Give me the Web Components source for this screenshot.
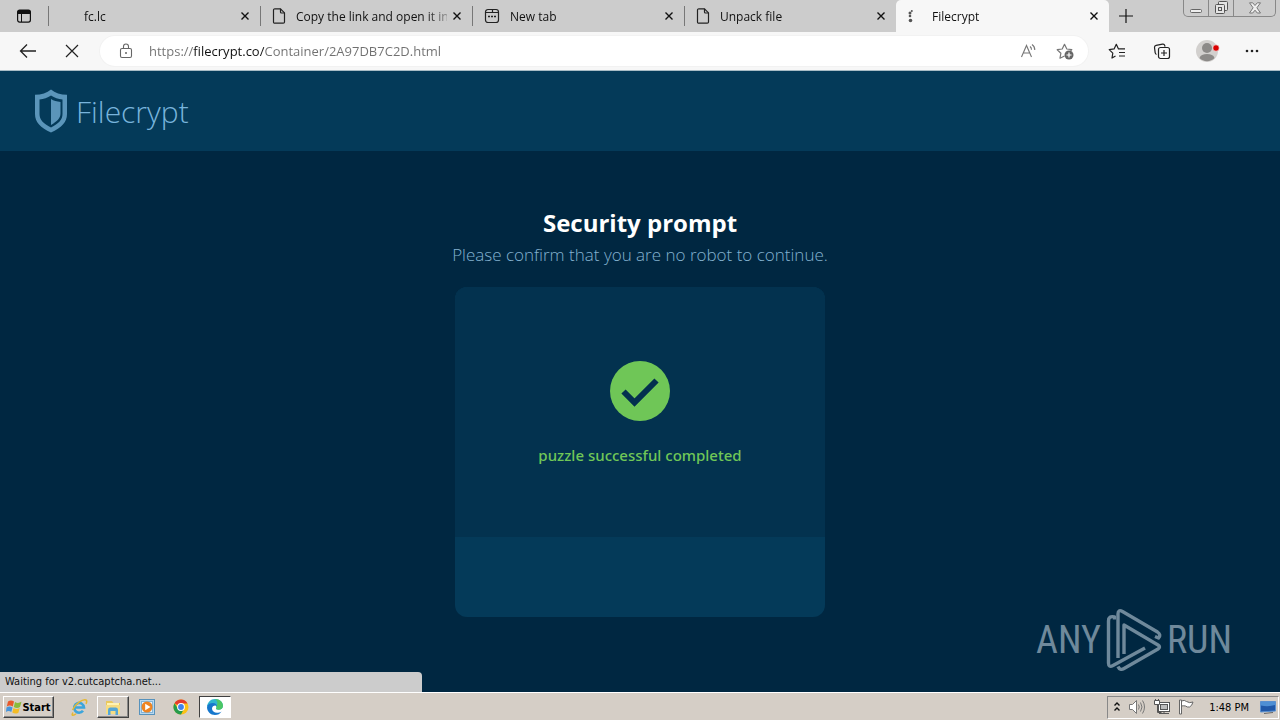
<!DOCTYPE html>
<html lang="en">
<head>
<meta charset="utf-8">
<meta name="viewport" content="width=device-width, initial-scale=1">
<title>Filecrypt</title>
<style>
html, body {
    height: 100%;
    margin: 0;
}
body {
    font-family: 'Open Sans', 'Noto Sans', sans-serif;
    font-size: 12px;
    overflow: hidden;
}
</style>
</head>
<body>
<app-desktop></app-desktop>

<script>
const icons = {
    panel: '<svg width="16" height="16" viewBox="0 0 16 16"><rect x="1.6" y="2.1" width="12.8" height="12" rx="2" fill="none" stroke="#111" stroke-width="1.2"/><path d="M1.5 6V4a2 2 0 0 1 2-2h9a2 2 0 0 1 2 2v2z" fill="#111"/><path d="M5.5 6v8" stroke="#111"/></svg>',
    file: '<svg width="14" height="16" viewBox="0 0 14 16" fill="none" stroke="#222" stroke-width="1.2" stroke-linejoin="round"><path d="M3 .8h5.5l4 4V14a1.2 1.2 0 0 1-1.2 1.2H3A1.2 1.2 0 0 1 1.5 14V2.2A1.3 1.3 0 0 1 3 .8z"/><path d="M8.5.8V4a1 1 0 0 0 1 1h3"/></svg>',
    newtab: '<svg width="16" height="16" viewBox="0 0 16 16" fill="none" stroke="#222" stroke-width="1.2"><path d="M1.5 4A2.5 2.5 0 0 1 4 1.500h8A2.5 2.5 0 0 1 14.5 4v8a2.5 2.5 0 0 1-2.5 2.5H4A2.5 2.5 0 0 1 1.5 12z"/><path d="M1.5 4.500h7V1.500M8.5 4.500h6"/><path d="M4 8.500h2M7 8.500h2M10 8.500h2" stroke-width="1.7"/></svg>',
    loading: '<svg width="14" height="16" viewBox="0 0 14 16" fill="#555"><circle cx="2" cy="5" r="1.5"/><circle cx="3.800" cy="3" r="1"/><circle cx="2" cy="8" r="1.3"/><circle cx="2.500" cy="12.500" r="1.8"/></svg>',
    close: '<svg width="10" height="10" viewBox="0 0 10 10"><path d="M1.5 1.500l7 7M8.5 1.500l-7 7" stroke="#111" stroke-width="1.4"/></svg>',
    plus: '<svg width="16" height="16" viewBox="0 0 16 16"><path d="M8 1v14M1 8h14" stroke="#111" stroke-width="1.2"/></svg>',
    back: '<svg width="18" height="16" viewBox="0 0 18 16" fill="none" stroke="#222" stroke-width="1.3"><path d="M17 8H1.500M8 1.500L1.500 8 8 14.500"/></svg>',
    stop: '<svg width="14" height="14" viewBox="0 0 14 14"><path d="M1 1l12 12M13 1L1 13" stroke="#222" stroke-width="1.2"/></svg>',
    lock: '<svg width="14" height="16" viewBox="0 0 14 16" fill="none" stroke="#666" stroke-width="1.1"><rect x="1.5" y="5.5" width="11" height="9" rx="1.5"/><path d="M4.5 5.500V3.500a2.500 2.500 0 0 1 5 0v2"/><circle cx="7" cy="10" r="1" fill="#666" stroke="none"/></svg>',
    read: '<svg width="18" height="16" viewBox="0 0 18 16" fill="none" stroke="#777" stroke-width="1.1"><path d="M1.5 14L6.500 2.500 11.500 14M3.200 10h6.600"/><path d="M10 3.500a4 4 0 0 1 1.500 3.200M12 1.500a6.500 6.500 0 0 1 2.800 5.500"/></svg>',
    addstar: '<svg width="18" height="18" viewBox="0 0 18 18" fill="none" stroke="#777" stroke-width="1.2" stroke-linejoin="round"><path d="M8.500 14L4 16.200l.9-5-3.700-3.500 5-.7 2.300-4.700L10.800 7l5 .7-1.300 1.300"/><circle cx="13" cy="13" r="4.5" fill="#666" stroke="none"/><path d="M10.500 13h5M13 10.500v5" stroke="#fff"/></svg>',
    favorites: '<svg width="18" height="18" viewBox="0 0 18 18" fill="none" stroke="#222" stroke-width="1.2" stroke-linejoin="round"><path d="M7.500 14L4 16l.8-4.900L1.200 7.600l4.900-.7L8.300 2.300l2.200 4.600H17M11 10.500h6M11 14h6"/></svg>',
    collections: '<svg width="18" height="18" viewBox="0 0 18 18" fill="none" stroke="#222" stroke-width="1.2"><path d="M3.500 12.500A2 2 0 0 1 2.200 10.800L1.500 5.500a2 2 0 0 1 1.600-2.200l6.400-1.200a2 2 0 0 1 2.300 1.500l.2 1"/><rect x="5.5" y="5.5" width="11" height="11" rx="2"/><path d="M8 11h6M11 8v6"/></svg>',
    profile: '<svg width="24" height="24" viewBox="0 0 24 24"><circle cx="12" cy="12" r="11" fill="#d2d0ce"/><circle cx="12" cy="9" r="5" fill="#8c8a88"/><path d="M4.500 19c1-3 3.500-4 7.500-4s6.500 1 7.500 4a10.500 10.500 0 0 1-15 0z" fill="#8c8a88"/><circle cx="21" cy="9" r="3.2" fill="#d90000" stroke="#f7f7f7" stroke-width=".6"/></svg>',
    more: '<svg width="16" height="16" viewBox="0 0 16 16" fill="#222"><circle cx="3" cy="8" r="1.3"/><circle cx="8" cy="8" r="1.3"/><circle cx="13" cy="8" r="1.3"/></svg>',
    minimize: '<svg width="14" height="12" viewBox="0 0 14 12"><rect x="1.5" y="7.5" width="11" height="3" rx="1" fill="#eee" stroke="#666"/></svg>',
    restore: '<svg width="14" height="14" viewBox="0 0 14 14" fill="#e4e4e4" stroke="#555"><rect x="4.5" y=".5" width="9" height="9" rx="1"/><rect x="1.5" y="3.5" width="9" height="9" rx="1"/><rect x="4.5" y="6.5" width="3" height="3"/></svg>',
    winclose: '<svg width="14" height="12" viewBox="0 0 14 12"><path d="M1.500.8h3.200L7 3.500 9.300.8h3.200L8.900 5.800l3.600 5.200H9.300L7 8.200 4.700 11H1.500l3.600-5.200z" fill="#eee" stroke="#777"/></svg>',
    shield: '<svg width="34" height="44" viewBox="0 0 34 44"><path fill-rule="evenodd" d="M17 .5c4 3.600 9.600 5.200 16 5.200V25c0 8-5.500 14-16 18.500C6.500 39 1 33 1 25V5.700c6.400 0 12-1.600 16-5.200zm0 6c-3.500 2.500-7.200 3.500-11.500 4V25c0 5.500 3.800 9.800 11.500 13.500 7.700-3.700 11.500-8 11.500-13.500V10.500c-4.300-.5-8-1.500-11.500-4z" fill="#5b95ba"/><path d="M17 10c2.700 1.700 5.800 2.600 9.500 3v11.500c0 4.500-3.500 8-9.500 11.500z" fill="#5b95ba"/></svg>',
    check: '<svg width="60" height="60" viewBox="0 0 60 60"><circle cx="30" cy="30" r="30" fill="#6fc657"/><path d="M13.500 30.500l11 11L46.500 19.500" fill="none" stroke="#03304f" stroke-width="6"/></svg>',
    play: '<svg width="56" height="64" viewBox="0 0 56 64" fill="none" stroke="currentColor" stroke-width="3.4" stroke-linejoin="round"><path d="M8.500 11.500V9Q2.500 7.500 2.500 13v42q0 5 4.500 2.500L39 40"/><path d="M12 50V6q0-5 4.500-2.500L51.500 24q4 3 1 6L49 28.500"/><path d="M18 46V17l34 20q3 2 0 4L18 60.500q-4 2.500-6-2"/></svg>',
    windows: '<svg width="16" height="16" viewBox="0 0 16 16"><path d="M2 2.500c2-1.500 4-1.500 6 0L6.800 7.500c-2-1.300-4-1.200-6-.1z" fill="#e8582a"/><path d="M9 3c2 1.200 4 1.200 6.500-.2L14 8c-2 1.200-4 1.200-6.200 0z" fill="#8abb3a"/><path d="M.5 8.500c2-1.200 4-1.200 6 0L5.300 13c-2-1.200-3.500-1.200-5.300 0z" fill="#4594dc"/><path d="M7.500 9c2 1.300 4 1.300 6.200 0l-1.300 4.700c-2 1.200-4 1.200-6.100-.2z" fill="#f4bc25"/></svg>',
    ie: '<svg width="18" height="18" viewBox="0 0 18 18" fill="none"><path d="M5 9.500h9A4.900 4.900 0 1 0 13 12.800" stroke="#3ba5dc" stroke-width="2.6"/><path d="M3 14.500C1 18 2.500 18 6 15.800M2.500 12C5 6 13 .5 16 2c1.200.7.8 2.200 0 3.800" stroke="#e5b834" stroke-width="1.5"/></svg>',
    explorer: '<svg width="18" height="18" viewBox="0 0 18 18"><path d="M2 3h6l1.500 2H16v11H2z" fill="#e9c85d"/><path d="M3 5h12v6H3z" fill="#fff3b2"/><path d="M2 7h14v9H2z" fill="#f6dc81"/><path d="M4 17v-5q0-2.500 2-2.500h6q2 0 2 2.500v5h-2.500v-4h-5v4z" fill="#54a6d6"/></svg>',
    media: '<svg width="16" height="16" viewBox="0 0 16 16"><rect x=".5" y=".5" width="15" height="15" fill="#b8d8ef" stroke="#5792bc"/><rect x="2.5" y="2.5" width="11" height="11" fill="#e7f3fb" stroke="#82b4d8"/><circle cx="8" cy="8" r="5.5" fill="#ee8422"/><path d="M6.200 4.800v6.400L11.500 8z" fill="#fff"/></svg>',
    chrome: '<svg width="16" height="16" viewBox="0 0 16 16"><circle cx="8" cy="8" r="7.5" fill="#fbc116"/><path d="M8 8L1.500 4.200A7.500 7.500 0 0 1 14.500 4.500H8z" fill="#e33b2e"/><path d="M1.500 4.200A7.500 7.500 0 0 0 8 15.500L11 9.700 5 9.700z" fill="#259b4c"/><circle cx="8" cy="8" r="3.9" fill="#fff"/><circle cx="8" cy="8" r="2.9" fill="#3f82ed"/></svg>',
    edge: '<svg width="18" height="18" viewBox="0 0 18 18"><path d="M1 8.800C1.300 4.500 4.700 1 9 1c4.700 0 8 3 8 6.800 0 2.500-2 4-4.500 4-1.800 0-2.800-.5-2.400-1.200 1.200-2-.3-4.100-3-4.100C4.200 6.500 2 7.500 1 8.800z" fill="#2fb5cf"/><path d="M9 1c4.700 0 8 3 8 6.800 0 2.500-2 4-4.500 4-1.800 0-2.800-.5-2.400-1.200.5-1 .5-1.700 0-2.500C12 6 12 3.500 9 1z" fill="#4cc665"/><path d="M1 9c.5-2.500 3-4 6-4 2.200 0 4 1.300 4 3.300-1-1.500-5-1-5 2.500 0 3.500 5 5.500 9.600 2.600A8 8 0 0 1 9 17C4.500 17 1 13.500 1 9z" fill="#1677cc"/></svg>',
    chevrons: '<svg width="8" height="10" viewBox="0 0 8 10" fill="none" stroke="#111" stroke-width="1.4"><path d="M1.500 3.500L4 1l2.500 2.500M1.500 8.500L4 6l2.500 2.500"/></svg>',
    volume: '<svg width="18" height="16" viewBox="0 0 18 16" fill="#fff" stroke="#777"><path d="M1.500 5.500h3l4-4v13l-4-4h-3z"/><path d="M10.500 5.500q1.500 2.500 0 5M12.500 3.500q3 4.500 0 9M14.500 1.500q4 6.500 0 13" fill="none"/></svg>',
    network: '<svg width="18" height="16" viewBox="0 0 18 16" fill="#fff" stroke="#555"><rect x="5.5" y="3.5" width="11" height="9"/><rect x="7.5" y="5.5" width="7" height="5" fill="#bbb"/><path d="M6 14.500h10M11 13v1"/><path d="M4.500 5v8.500h4" fill="none"/><path d="M1.500 1.500h5v4h-5zM2.500 0v2M5.500 0v2"/></svg>',
    flag: '<svg width="16" height="16" viewBox="0 0 16 16" fill="#fff" stroke="#666"><path d="M1.500 1h2v14h-2z"/><path d="M3.500 2q3-1.500 5 .5 3 2 6.500.5-1 4-3.500 5-2 .5-4-1-2-.5-4 0z"/></svg>',
    show: '<svg width="16" height="14" viewBox="0 0 16 14"><path d="M.5 1.500h15v9.500l-15 1z" fill="#2058a8" stroke="#5a90d0"/><path d="M1 2h14v3Q8 7 1 5.500z" fill="#4e8fd4"/><path d="M4 13.500l9-1" stroke="#666"/></svg>'
};

// Attaches an open shadow root with the given markup
class BaseElement extends HTMLElement {
    constructor() {
        super();
        this.attachShadow({mode: 'open'});
    }

    connectedCallback() {
        const template = document.createElement('template');
        template.innerHTML = this.render();
        this.shadowRoot.replaceChildren(template.content.cloneNode(true));
    }
}

class UiIcon extends BaseElement {
    render() {
        return `
<style>
:host { display: inline-flex; flex: none; }
svg { display: block; overflow: visible; }
</style>
${icons[this.getAttribute('name')] || ''}`;
    }
}

class IconButton extends BaseElement {
    render() {
        return `
<style>
:host { display: flex; flex: none; }
button {
    display: flex;
    align-items: center;
    justify-content: center;
    width: var(--size, 28px);
    height: 28px;
    padding: 0;
    border: 0;
    background: none;
}
</style>
<button type="button" aria-label="${this.getAttribute('label')}"><ui-icon name="${this.getAttribute('icon')}"></ui-icon></button>`;
    }
}

class BrowserTab extends BaseElement {
    render() {
        return `
<style>
:host {
    display: flex;
    flex: 0 1 212px;
    min-width: 0;
    box-sizing: border-box;
    align-items: center;
    padding: 0 5px 0 12px;
    background: linear-gradient(#777, #777) left center / 1px 20px no-repeat;
}
:host([active]) {
    flex-basis: 213px;
    background: #f7f7f7;
    border-radius: 5px 5px 0 0;
}
.tab {
    display: flex;
    flex: 1;
    min-width: 0;
    align-items: center;
    gap: 10px;
    height: 32px;
    padding: 0;
    border: 0;
    background: none;
    color: #111;
    font: inherit;
}
.icon {
    display: flex;
    justify-content: center;
    flex: 0 0 14px;
}
.title {
    flex: 1;
    overflow: hidden;
    white-space: nowrap;
    text-align: left;
    -webkit-mask-image: linear-gradient(to right, #000 130px, transparent 160px);
    mask-image: linear-gradient(to right, #000 130px, transparent 160px);
}
icon-button { --size: 20px; }
</style>
<button class="tab" type="button">
    <span class="icon"><ui-icon name="${this.getAttribute('icon') || ''}"></ui-icon></span>
    <span class="title"><slot></slot></span>
</button>
<icon-button icon="close" label="Close tab"></icon-button>`;
    }
}

class WindowControls extends BaseElement {
    render() {
        return `
<style>
:host {
    display: flex;
    align-self: flex-start;
    height: 16px;
    margin: 0 4px 0 auto;
    border: 1px solid #888;
    border-top: 0;
    border-radius: 0 0 5px 5px;
}
button {
    display: flex;
    align-items: center;
    justify-content: center;
    width: 25px;
    padding: 0;
    border: 0;
    border-right: 1px solid #888;
    background: none;
}
button:last-child { width: 41px; border-right: 0; }
</style>
<button type="button" aria-label="Minimize"><ui-icon name="minimize"></ui-icon></button>
<button type="button" aria-label="Restore"><ui-icon name="restore"></ui-icon></button>
<button type="button" aria-label="Close"><ui-icon name="winclose"></ui-icon></button>`;
    }
}

class TabStrip extends BaseElement {
    render() {
        return `
<style>
:host {
    display: flex;
    height: 32px;
    background: #ccc;
}
.menu { --size: 48px; align-items: center; }
.new { --size: 34px; align-items: center; }
</style>
<icon-button class="menu" icon="panel" label="Tab actions"></icon-button>
<slot></slot>
<icon-button class="new" icon="plus" label="New tab"></icon-button>
<window-controls></window-controls>`;
    }
}

class AddressBar extends BaseElement {
    render() {
        return `
<style>
:host {
    display: flex;
    align-items: center;
    height: 38px;
    padding: 0 6px;
    background: #f7f7f7;
    border-bottom: 1px solid #a9bcc6;
}
.nav { --size: 44px; }
.box {
    display: flex;
    flex: 1;
    align-items: center;
    height: 30px;
    padding: 0 5px 0 12px;
    margin: 0 6px;
    border-radius: 15px;
    background: #fff;
    box-shadow: 0 0 0 1px #f2f2f2;
}
.box icon-button { --size: 36px; }
.box .lock { --size: 28px; }
input {
    flex: 1;
    min-width: 0;
    height: 24px;
    padding: 0;
    margin-left: 9px;
    border: 0;
    outline: 0;
    font: 13px 'Open Sans', sans-serif;
    color: transparent;
    background: linear-gradient(to right, #707070 44px, #111 44px, #111 115px, #707070 115px);
    -webkit-background-clip: text;
    background-clip: text;
}
.actions { display: flex; }
.actions icon-button { --size: 45px; }
</style>
<icon-button class="nav" icon="back" label="Back"></icon-button>
<icon-button class="nav" icon="stop" label="Stop"></icon-button>
<div class="box">
    <icon-button class="lock" icon="lock" label="Site information"></icon-button>
    <input type="text" aria-label="Address" value="${this.getAttribute('url')}">
    <icon-button icon="read" label="Read aloud"></icon-button>
    <icon-button icon="addstar" label="Add to favorites"></icon-button>
</div>
<div class="actions">
    <icon-button icon="favorites" label="Favorites"></icon-button>
    <icon-button icon="collections" label="Collections"></icon-button>
    <icon-button icon="profile" label="Profile"></icon-button>
    <icon-button icon="more" label="Settings"></icon-button>
</div>`;
    }
}

class SiteHeader extends BaseElement {
    render() {
        return `
<style>
:host {
    display: flex;
    align-items: center;
    height: 80px;
    padding: 0 34px;
    background: #043a59;
}
a {
    display: flex;
    align-items: center;
    gap: 8px;
    color: #78b4dc;
    font-size: 30px;
    font-weight: 300;
    text-decoration: none;
}
</style>
<a href="#"><ui-icon name="shield"></ui-icon><slot></slot></a>`;
    }
}

class CaptchaCard extends BaseElement {
    render() {
        return `
<style>
:host {
    display: block;
    box-sizing: border-box;
    width: 370px;
    max-width: 100%;
    overflow: hidden;
    border-radius: 12px;
    background: #043a59;
}
.result {
    display: flex;
    flex-direction: column;
    align-items: center;
    gap: 22px;
    padding: 74px 0 70px;
    background: #03324f;
    color: #70c757;
    font: 500 15px/24px 'Noto Sans', sans-serif;
}
.footer { height: 80px; }
</style>
<div class="result">
    <ui-icon name="check"></ui-icon>
    <slot></slot>
</div>
<div class="footer"></div>`;
    }
}

class SecurityPrompt extends BaseElement {
    render() {
        return `
<style>
:host {
    display: flex;
    flex-direction: column;
    align-items: center;
    padding-top: 54px;
}
h2 {
    margin: 0;
    color: #fff;
    font-size: 24px;
    line-height: 36px;
}
p {
    margin: 0 0 18px;
    color: #84b2d0;
    font-size: 17px;
    font-weight: 300;
    line-height: 28px;
}
</style>
<h2><slot name="title"></slot></h2>
<p><slot name="text"></slot></p>
<slot></slot>`;
    }
}

class StatusBubble extends BaseElement {
    render() {
        return `
<style>
:host {
    position: absolute;
    left: 0;
    bottom: 0;
    box-sizing: border-box;
    width: 33%;
    padding: 0 5px;
    border-radius: 0 4px 0 0;
    background: #ccc;
    color: #111;
    font: 11px/20px 'DejaVu Sans Condensed', 'Noto Sans', sans-serif;
}
</style>
<slot></slot>`;
    }
}

class RunWatermark extends BaseElement {
    render() {
        return `
<style>
:host {
    position: absolute;
    right: 48px;
    bottom: 20px;
    display: flex;
    align-items: center;
    gap: 5px;
    color: #6f899b;
    font: 38px 'Roboto Condensed', 'Liberation Sans Narrow', sans-serif;
}
</style>
<span>ANY</span><ui-icon name="play"></ui-icon><span>RUN</span>`;
    }
}

class TaskBar extends BaseElement {
    render() {
        return `
<style>
:host {
    display: flex;
    align-items: center;
    box-sizing: border-box;
    height: 28px;
    padding: 1px 1px 0 3px;
    border-top: 1px solid #fff;
    background: #d5cec6;
    color: #000;
    font: 11px 'DejaVu Sans Condensed', 'Noto Sans', sans-serif;
}
button {
    display: flex;
    align-items: center;
    justify-content: center;
    box-sizing: border-box;
    width: 32px;
    height: 22px;
    padding: 0;
    border: 1px solid transparent;
    background: none;
    font: inherit;
    color: inherit;
}
.start, .open {
    border-color: #fff #404040 #404040 #fff;
    box-shadow: inset -1px -1px #888;
}
.start {
    width: 51px;
    font-weight: 700;
}
.apps {
    display: flex;
    gap: 2px;
    margin-left: 9px;
}
.current {
    border-color: #404040 #fff #fff #404040;
    background: #fff;
}
.tray {
    display: flex;
    align-items: center;
    gap: 7px;
    height: 21px;
    margin-left: auto;
    padding: 0 2px 0 5px;
    border: 1px solid;
    border-color: #888 #fff #fff #888;
}
time { margin: 0 4px 0 8px; }
</style>
<button class="start" type="button"><ui-icon name="windows"></ui-icon>Start</button>
<div class="apps">
    <button type="button" aria-label="Internet Explorer"><ui-icon name="ie"></ui-icon></button>
    <button class="open" type="button" aria-label="Explorer"><ui-icon name="explorer"></ui-icon></button>
    <button type="button" aria-label="Media Player"><ui-icon name="media"></ui-icon></button>
    <button type="button" aria-label="Chrome"><ui-icon name="chrome"></ui-icon></button>
    <button class="current" type="button" aria-label="Edge"><ui-icon name="edge"></ui-icon></button>
</div>
<div class="tray">
    <ui-icon name="chevrons"></ui-icon>
    <ui-icon name="volume"></ui-icon>
    <ui-icon name="network"></ui-icon>
    <ui-icon name="flag"></ui-icon>
    <time datetime="13:48">1:48 PM</time>
    <ui-icon name="show"></ui-icon>
</div>`;
    }
}

class AppDesktop extends BaseElement {
    render() {
        return `
<style>
:host {
    display: flex;
    flex-direction: column;
    height: 100vh;
}
main {
    position: relative;
    flex: 1;
    min-height: 0;
    overflow: hidden;
    background: #002741;
}
</style>
<tab-strip>
    <browser-tab>fc.lc</browser-tab>
    <browser-tab icon="file">Copy the link and open it in</browser-tab>
    <browser-tab icon="newtab">New tab</browser-tab>
    <browser-tab icon="file">Unpack file</browser-tab>
    <browser-tab icon="loading" active>Filecrypt</browser-tab>
</tab-strip>
<address-bar url="https://filecrypt.co/Container/2A97DB7C2D.html"></address-bar>
<main>
    <site-header>Filecrypt</site-header>
    <security-prompt>
        <span slot="title">Security prompt</span>
        <span slot="text">Please confirm that you are no robot to continue.</span>
        <captcha-card>puzzle successful completed</captcha-card>
    </security-prompt>
    <status-bubble>Waiting for v2.cutcaptcha.net...</status-bubble>
    <run-watermark></run-watermark>
</main>
<task-bar></task-bar>`;
    }
}

window.customElements.define('ui-icon', UiIcon);
window.customElements.define('icon-button', IconButton);
window.customElements.define('browser-tab', BrowserTab);
window.customElements.define('window-controls', WindowControls);
window.customElements.define('tab-strip', TabStrip);
window.customElements.define('address-bar', AddressBar);
window.customElements.define('site-header', SiteHeader);
window.customElements.define('captcha-card', CaptchaCard);
window.customElements.define('security-prompt', SecurityPrompt);
window.customElements.define('status-bubble', StatusBubble);
window.customElements.define('run-watermark', RunWatermark);
window.customElements.define('task-bar', TaskBar);
window.customElements.define('app-desktop', AppDesktop);
</script>
</body>
</html>
